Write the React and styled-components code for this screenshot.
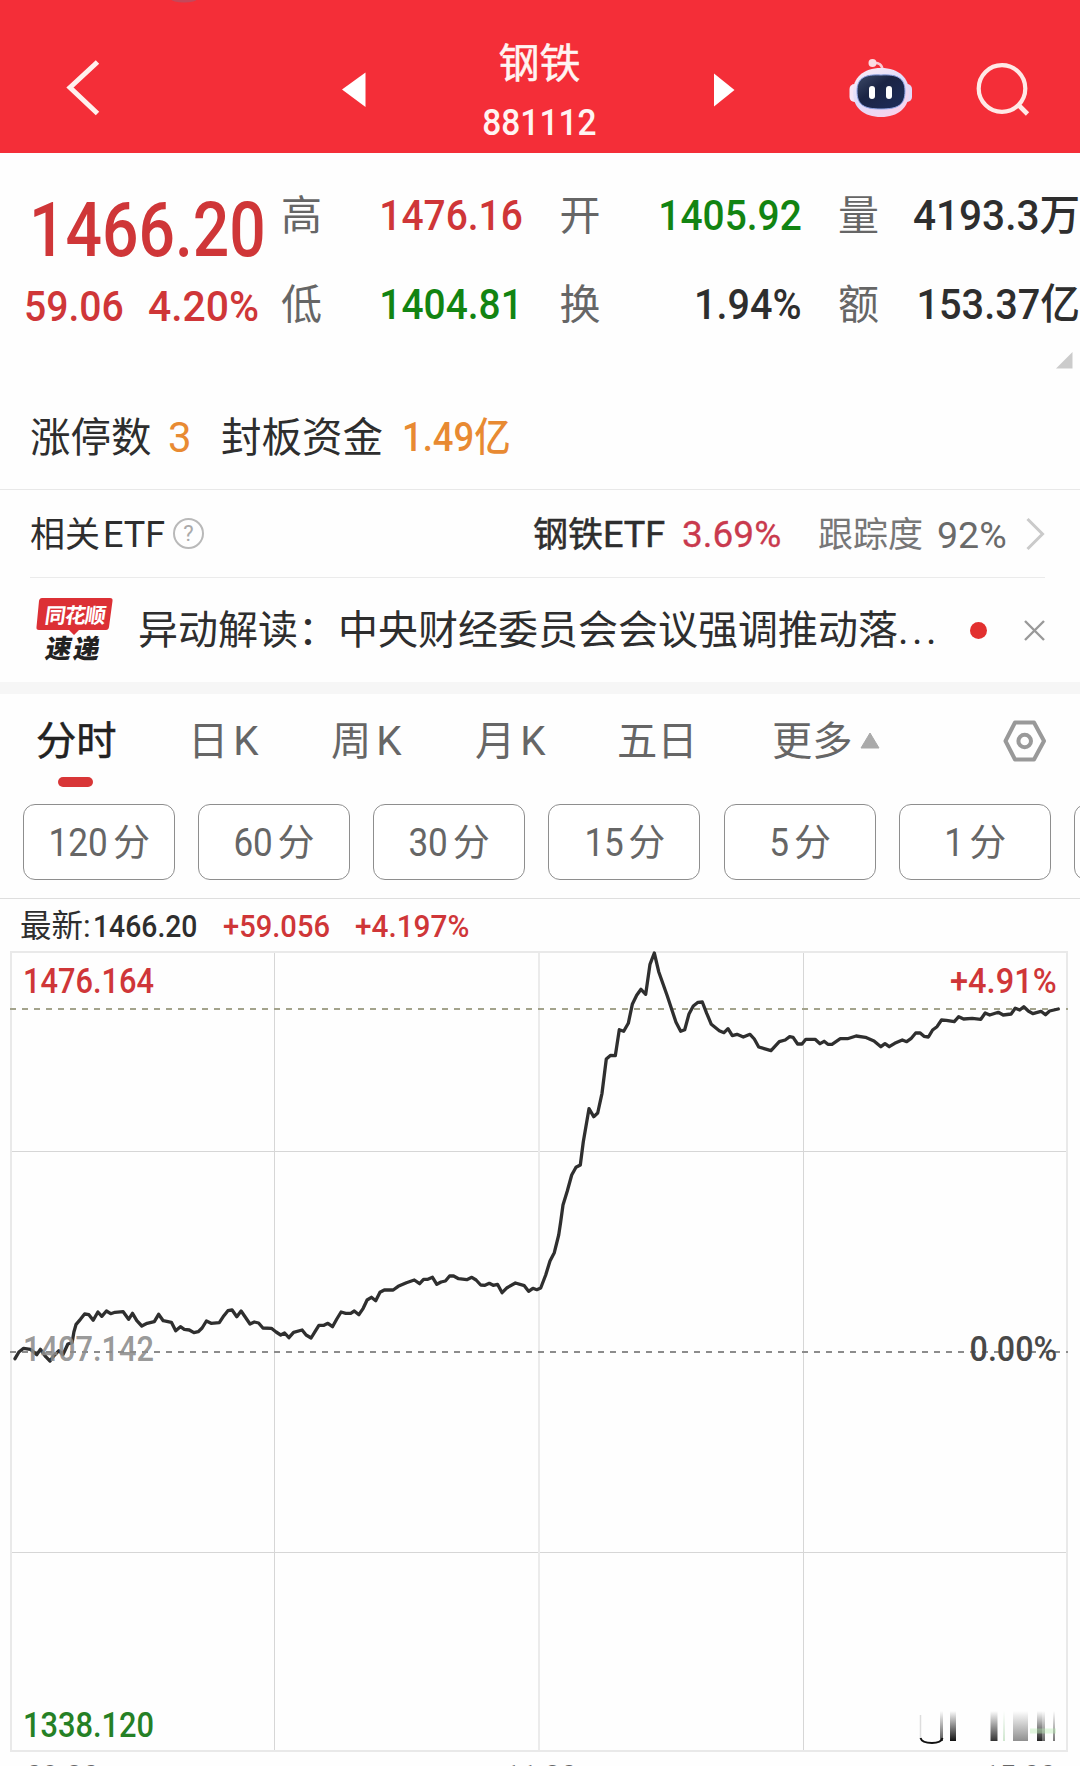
import React from "react";
import styled, { createGlobalStyle } from "styled-components";

const GlobalStyle = createGlobalStyle`
  html, body { margin: 0; padding: 0; background: #fff; }
  * { box-sizing: border-box; }
`;

const RED = "#cf3638";
const GREEN = "#128412";
const INK = "#2e2e2e";
const GRAY = "#666";

const Screen = styled.main`
  width: 1080px;
  height: 1766px;
  overflow: hidden;
  background: #fefefe;
  color: ${INK};
  font-family: Roboto, "Noto Sans CJK SC", sans-serif;
  display: flex;
  flex-direction: column;
`;

/* Narrow figures: the glyph run is condensed from one edge of its box */
const Num = styled.span`
  display: block;
  flex: none;
  white-space: nowrap;
  font-size: ${(p) => p.$size}px;
  line-height: ${(p) => p.$size}px;
  font-weight: ${(p) => p.$weight || 500};
  color: ${(p) => p.$color || "inherit"};
  transform: scaleX(${(p) => p.$k || 1});
  transform-origin: ${(p) => p.$from || "left"} center;
`;

const Header = styled.header`
  flex: none;
  height: 153px;
  background: #f42e38;
  color: #fff4f2;
  display: grid;
  grid-template-columns: 340px 400px 340px;
`;
const HeaderSide = styled.div`
  display: flex;
  align-items: flex-start;
`;
const HeaderTools = styled(HeaderSide)`
  padding: 58px 0 0 109px;
  gap: 60px;
`;
const HeaderCenter = styled.div`
  display: flex;
  justify-content: space-between;
  padding: 72px 4px 0 1px;
`;
const TitleBlock = styled.div`
  margin-top: -37px;
  width: 160px;
  display: flex;
  flex-direction: column;
  align-items: center;
`;
const Title = styled.h1`
  margin: 0;
  font-size: 41px;
  line-height: 50px;
  font-weight: 400;
  -webkit-text-stroke: 0.5px currentColor;
  font-family: "Noto Sans CJK SC", sans-serif;
`;
const Code = styled.div`
  margin-top: 20px;
`;

const Quote = styled.section`
  flex: none;
  height: 337px;
  border-bottom: 1px solid #e8e8e8;
  padding-top: 41px;
`;
const QuoteTop = styled.div`
  display: grid;
  grid-template-columns: 281px 1fr;
  height: 158px;
`;
const PriceBlock = styled.div`
  color: ${RED};
  padding: 0 0 0 24px;
  margin-top: -2px;
`;
const Price = styled.div`
  height: 93px;
  padding: 0 0 0 5px;
`;
const Changes = styled.div`
  display: grid;
  grid-template-columns: 124px 120px;
`;
const Stats = styled.div`
  display: grid;
  grid-template-columns: repeat(3, 242px);
  grid-auto-rows: 89px;
  column-gap: 36.500px;
`;
const Stat = styled.div`
  display: flex;
  justify-content: space-between;
  height: 44px;
  align-items: center;
`;
const StatLabel = styled.span`
  flex: none;
  font-size: 41px;
  line-height: 44px;
  color: ${GRAY};
`;
const CornerRow = styled.div`
  display: flex;
  justify-content: flex-end;
  padding-right: 7px;
  height: 60px;
`;
const Limits = styled.div`
  display: flex;
  align-items: center;
  padding-left: 30px;
  height: 52px;
`;
const LimitLabel = styled.span`
  font-size: 40.500px;
  line-height: 52px;
  width: ${(p) => p.$w}px;
  flex: none;
  white-space: nowrap;
`;
const LimitValue = styled.span`
  width: ${(p) => p.$w}px;
  flex: none;
`;

const EtfRow = styled.section`
  flex: none;
  height: 88px;
  margin: 0 35px 0 30px;
  border-bottom: 1px solid #ebebeb;
  display: flex;
  align-items: center;
  font-size: 35px;
  line-height: 44px;
`;
const EtfText = styled.span`
  flex: none;
  white-space: nowrap;
  padding-top: ${(p) => p.$down || 2}px;
  width: ${(p) => p.$w}px;
  font-size: ${(p) => p.$size || 35}px;
  -webkit-text-stroke: ${(p) => p.$stroke || 0}px currentColor;
  color: ${(p) => p.$color || INK};
`;
const Latin = styled.span`
  font-size: 36px;
  margin-left: ${(p) => p.$gap || 0}px;
`;
const Help = styled.span`
  width: 31px;
  height: 31px;
  margin-right: 329px;
  flex: none;
  border: 2px solid #b9b9b9;
  border-radius: 50%;
  color: #aaa;
  font-size: 22px;
  line-height: 27px;
  text-align: center;
`;

const News = styled.section`
  flex: none;
  height: 104px;
  display: flex;
  align-items: center;
  padding: 0 36px;
`;
const Brand = styled.div`
  width: 77px;
  height: 64px;
  margin-right: 25px;
  flex: none;
  display: grid;
  grid-template-rows: 37px 27px;
  justify-items: center;
  position: relative;
`;
const BrandBack = styled.svg`
  position: absolute;
  inset: 0;
`;
const BrandName = styled.span`
  position: relative;
  color: #fff;
  font: 700 21px/32px "Noto Sans CJK SC", sans-serif;
  transform: skewX(-8deg);
  letter-spacing: -1px;
`;
const BrandSub = styled.span`
  position: relative;
  color: #222;
  font: 900 26px/24px "Noto Sans CJK SC", sans-serif;
  transform: skewX(-10deg);
  letter-spacing: 2px;
`;
const Headline = styled.span`
  flex: none;
  width: 832px;
  padding-top: 1px;
  font-size: 40px;
  line-height: 50px;
  white-space: nowrap;
`;
const Dots = styled.span`
  letter-spacing: 3.500px;
`;
const Unread = styled.i`
  width: 17px;
  height: 17px;
  border-radius: 50%;
  background: #e2302f;
  margin-right: 37px;
  flex: none;
`;
const CloseIcon = styled.svg`
  flex: none;
`;
const Band = styled.div`
  flex: none;
  height: 12px;
  background: #f6f6f6;
`;

const Tabs = styled.nav`
  flex: none;
  height: 110px;
  display: grid;
  grid-template-columns: 152px 143px 144px 142px 155px 231px 1fr;
  padding: 21px 0 0 36px;
`;
const Tab = styled.div`
  display: flex;
  flex-direction: column;
  align-items: flex-start;
  font-size: 40.300px;
  line-height: 50px;
  white-space: nowrap;
  color: ${(p) => (p.$active ? "#222" : GRAY)};
  -webkit-text-stroke: ${(p) => (p.$active ? 0.5 : 0)}px currentColor;
`;
const TabText = styled.span`
  display: flex;
  align-items: center;
  padding-top: 2px;
  gap: ${(p) => p.$gap || 0}px;
`;
const MoreIcon = styled.svg`
  margin: -4px 0 0 7px;
`;
const Underline = styled.i`
  width: 35px;
  height: 10px;
  border-radius: 5px;
  background: #d83637;
  margin: 10px 0 0 22px;
`;

const Periods = styled.div`
  flex: none;
  height: 95px;
  border-bottom: 1px solid #dedede;
  padding-left: 23px;
  display: flex;
  gap: 23.150px;
  overflow: hidden;
`;
const Period = styled.button`
  flex: none;
  width: 152px;
  height: 76px;
  padding: 2px ${(p) => p.$shift || 0}px 0 0;
  border: 1px solid #8e8e8e;
  border-radius: 12px;
  background: #fff;
  color: ${GRAY};
  font: 400 37px/50px Roboto, "Noto Sans CJK SC", sans-serif;
  display: flex;
  justify-content: center;
  align-items: center;
  gap: 5px;
`;
const Unit = styled.span`
  padding-top: 2px;
`;

const Latest = styled.div`
  flex: none;
  height: 52px;
  padding: 2px 0 0 20px;
  display: grid;
  grid-template-columns: 73px 130px 132px 1fr;
  align-items: center;
  font-size: 31.500px;
  line-height: 40px;
  white-space: nowrap;
`;
const LatestLabel = styled.span`
  padding-top: 2px;
`;

const Chart = styled.section`
  flex: none;
  height: 801px;
  position: relative;
`;
const Plot = styled.svg`
  display: block;
`;
const ChartLabel = styled.div`
  position: absolute;
  top: ${(p) => p.$top}px;
  ${(p) => (p.$right ? "right: 23px;" : "left: 23px;")}
`;
const Axis = styled.div`
  flex: none;
  height: 30px;
  padding: 8px 24px 0 26px;
  display: flex;
  justify-content: space-between;
  color: #666;
`;

const series = [
  [15,1358.7],[18.9,1352],[23.6,1348.3],[30.4,1349.3],[36.8,1354.7],[40.4,1349.3],[45.7,1356.7],[50,1361],[54.3,1355.3],[58.9,1350.7],[62.9,1354.7],[67.9,1344],[72.1,1342.7],[73.9,1332],[76.1,1324.3],[80.4,1319.3],[84.6,1314],[88.9,1314.7],[93.2,1320.3],[97.9,1312],[101.8,1316.3],[106.4,1311],[110.7,1313.7],[115,1312.3],[123.2,1311.7],[128.6,1319.3],[132.5,1313.3],[136.8,1320.7],[141.8,1326],[147.1,1323.3],[154.3,1321.7],[158.6,1314.3],[163.2,1320.7],[171.4,1322.3],[175.7,1330.7],[180.4,1326.7],[184.3,1329.3],[189.3,1330],[193.9,1332.7],[198.2,1331.7],[202.1,1328],[206.4,1321],[211.1,1323.3],[219.3,1322.7],[223.9,1315.7],[227.9,1310.7],[232.1,1310],[236.8,1316.7],[241.1,1311],[250,1324],[254.3,1322],[258.6,1323],[262.9,1328],[271.4,1328.3],[276.1,1332],[280.7,1335],[284.6,1333],[288.9,1337.7],[293.6,1332.3],[302.1,1330],[306.1,1335],[311.1,1338],[315,1331.7],[318.9,1325.3],[323.9,1325.3],[327.9,1323.3],[332.5,1326.7],[336.8,1319],[341.1,1312],[345.7,1313.3],[350.7,1313.3],[354.3,1311],[358.9,1314.7],[363.2,1308.3],[367.1,1300],[371.4,1297.3],[375.7,1300.7],[380,1292.3],[384.3,1290],[393.2,1290],[398.2,1286.3],[406.4,1282.7],[414.3,1280],[419.6,1283.7],[423.6,1279.3],[427.9,1279.3],[432.5,1277.3],[436.8,1284.3],[441.1,1282],[445.4,1281],[449.6,1276],[453.6,1276],[458.6,1278.7],[466.8,1279.7],[471.8,1277.3],[476.1,1280],[480.7,1285],[485,1285.3],[489.3,1283.3],[493.2,1285.3],[497.5,1284.3],[502.1,1292.7],[507.1,1287.7],[515.4,1283],[524.3,1285.7],[528.6,1291.3],[532.9,1288.3],[536.8,1289.7],[540.7,1288],
  [545.7,1275],[550,1261],[554.3,1252.7],[558.7,1235],[560.7,1221.7],[563,1205],[567.3,1191],[571.7,1175],[576,1167.3],[580.3,1165],[583.3,1141.7],[589,1108.7],[593.7,1116.7],[597.7,1113],[602,1093.3],[606.3,1059],[610.7,1055.3],[615.3,1055.7],[619.3,1029.7],[623.7,1031.3],[628.3,1023.3],[632.3,1004.3],[636.7,995.3],[641,989.3],[645.7,994.3],[650,964.3],[654.3,953],[658.7,971.7],[667.3,996],[676,1022.3],[680.7,1031.3],[684.7,1029.7],[689,1014],[693.3,1006],[698,1002.3],[702.3,1002],[706.7,1013.3],[711.3,1024.3],[719.3,1030.7],[724,1032.7],[728,1028.7],[732.3,1035.7],[737,1034.3],[743.3,1037],[750,1034.3],[754.3,1039],[758.7,1047],[771,1050.7],
  [779.3,1041.7],[785.2,1040],[789.7,1036.7],[793.1,1037.3],[797.6,1044],[802,1044],[805.8,1039.3],[815.1,1039.3],[820,1043.7],[824.1,1041.3],[827.9,1044.3],[832,1044.3],[840.3,1038.7],[847.5,1038.7],[856.1,1036],[865.4,1037.3],[874,1041],[880.9,1046.7],[885,1043.7],[889.2,1046.7],[894.7,1043.3],[902.3,1040],[906.7,1041.7],[910.9,1038.7],[915.7,1033],[920.2,1033],[924,1036.3],[928.4,1037],[932.6,1030],[937,1026.7],[941.5,1020],[946.3,1020.3],[954.3,1021.7],[958.7,1016.7],[963.6,1019],[972.2,1018.3],[980.8,1019.3],[985.2,1013],[989.7,1015],[998.3,1012.3],[1003.2,1015],[1011.1,1014],[1015.2,1008.3],[1019.7,1010],[1023.8,1006.7],[1028.3,1011],[1032.8,1013.7],[1041,1011.3],[1045.5,1014.7],[1049.6,1011],[1058.2,1009],
];

const stats = [
  { label: "高", value: "1476.16", color: RED, k: 0.915 },
  { label: "开", value: "1405.92", color: GREEN, k: 0.915 },
  { label: "量", value: "4193.3万", k: 0.955 },
  { label: "低", value: "1404.81", color: GREEN, k: 0.915 },
  { label: "换", value: "1.94%", k: 0.93 },
  { label: "额", value: "153.37亿", k: 0.935 },
];

/* number of minutes and how far its label sits left of the middle */
const periods = [["120", 6], ["60", 5], ["30", 5], ["15", 4], ["5", 1], ["1", 1]];

/* x, width, colour of the faded strokes in the chart's lower corner */
const smears = [
  [940, 3, "#555"], [950, 6, "#111"], [990.5, 7, "#333"], [1003, 2, "#cfe6cf"],
  [1013, 15, "#8f8f8f"], [1037, 5, "#222"], [1042, 3, "#666"], [1053, 2, "#777"],
];

function Robot() {
  return (
    <svg width="64" height="60" viewBox="0 0 64 60">
      <defs>
        <linearGradient id="shell" x1="0" y1="0" x2="0.6" y2="1">
          <stop offset="0" stopColor="#ffeef4" />
          <stop offset="0.55" stopColor="#dfdcfb" />
          <stop offset="1" stopColor="#f6d3ec" />
        </linearGradient>
        <linearGradient id="visor" x1="0" y1="0" x2="1" y2="1">
          <stop offset="0" stopColor="#3c4a68" />
          <stop offset="0.4" stopColor="#1b2444" />
          <stop offset="1" stopColor="#1d2d5c" />
        </linearGradient>
      </defs>
      <path d="M24 5 Q33 4 33.500 12" fill="none" stroke="#f9c9d2" strokeWidth="2.600" />
      <circle cx="23.500" cy="5" r="4" fill="#fbdce3" />
      <rect x="0.500" y="26" width="10" height="18" rx="5" fill="#f6e6f6" />
      <rect x="53" y="26" width="10" height="18" rx="5" fill="#e3d9f8" />
      <path d="M32 10 C50 10 60 20 60 34 C60 50 49 59 32 59 C15 59 4 50 4 34 C4 20 14 10 32 10 Z" fill="url(#shell)" />
      <path d="M32 17 C48 16 56 20 56 33 C56 47 49 51 32 51 C15 51 8 47 8 33 C8 20 16 16 32 17 Z" fill="url(#visor)" stroke="#8fa5e6" strokeWidth="1" />
      <rect x="20" y="28" width="6" height="13" rx="3" fill="#fff" />
      <rect x="37" y="28" width="6" height="13" rx="3" fill="#fff" />
    </svg>
  );
}

export default function App() {
  return (
    <Screen>
      <GlobalStyle />
      <Header>
        <HeaderSide>
          <svg width="340" height="153">
            <ellipse cx="184" cy="-1" rx="13" ry="3.500" fill="#c4485a" />
            <path d="M97.500 62 L70 87.500 L97.500 113.500" fill="none" stroke="#fff1ee" strokeWidth="5" />
          </svg>
        </HeaderSide>
        <HeaderCenter>
          <svg width="26" height="36"><path d="M1 17.500 L24.500 0.500 V35 Z" fill="#fff" /></svg>
          <TitleBlock>
            <Title>钢铁</Title>
            <Code><Num $size={36} $k={0.93} $from="center">881112</Num></Code>
          </TitleBlock>
          <svg width="24" height="36"><path d="M22.500 18 L2 1.500 V34.500 Z" fill="#fff" /></svg>
        </HeaderCenter>
        <HeaderTools>
          <Robot />
          <svg width="60" height="64">
            <circle cx="29" cy="30.500" r="23.300" fill="none" stroke="#ffe9e6" strokeWidth="4.200" />
            <path d="M46 47.500 L54.500 56" stroke="#ffe9e6" strokeWidth="4.600" />
          </svg>
        </HeaderTools>
      </Header>

      <Quote>
        <QuoteTop>
          <PriceBlock>
            <Price><Num $size={76} $k={0.845}>1466.20</Num></Price>
            <Changes>
              <Num $size={43} $k={0.91}>59.06</Num>
              <Num $size={43} $k={0.95}>4.20%</Num>
            </Changes>
          </PriceBlock>
          <Stats>
            {stats.map((s) => (
              <Stat key={s.label}>
                <StatLabel>{s.label}</StatLabel>
                <Num $size={42.500} $k={s.k} $color={s.color} $from="right">{s.value}</Num>
              </Stat>
            ))}
          </Stats>
        </QuoteTop>
        <CornerRow>
          <svg width="17" height="17"><path d="M16.500 0 V16.500 H0 Z" fill="#cbcbcb" /></svg>
        </CornerRow>
        <Limits>
          <LimitLabel $w={138}>涨停数</LimitLabel>
          <LimitValue $w={53}><Num $size={42} $weight={400} $color="#e88a32">3</Num></LimitValue>
          <LimitLabel $w={181}>封板资金</LimitLabel>
          <LimitValue $w={120}><Num $size={40} $k={0.91} $color="#e88a32">1.49亿</Num></LimitValue>
        </Limits>
      </Quote>

      <EtfRow>
        <EtfText $w={143} $down={4}>相关<Latin $gap={3}>ETF</Latin></EtfText>
        <Help>?</Help>
        <EtfText $w={149} $stroke={0.5} $down={4}>钢铁<Latin>ETF</Latin></EtfText>
        <EtfText $w={136} $color="#c93a4e" $size={37} $stroke={0.3}>3.69%</EtfText>
        <EtfText $w={119} $color="#777" $down={4}>跟踪度</EtfText>
        <EtfText $w={88} $color="#6a6a6a" $size={37.500}>92%</EtfText>
        <svg width="20" height="34"><path d="M2.500 2 L17.500 17 L2.500 32" fill="none" stroke="#cacaca" strokeWidth="3" /></svg>
      </EtfRow>

      <News>
        <Brand>
          <BrandBack width="77" height="64">
            <path d="M6 0 H74 Q77 0 76.500 3 L73 29 Q72.500 32 70 32 H43 L38 37 L33 32 H3 Q0 32 0.500 29 L3 3 Q3.500 0 6 0 Z" fill="#dc3035" />
          </BrandBack>
          <BrandName>同花顺</BrandName>
          <BrandSub>速递</BrandSub>
        </Brand>
        <Headline>异动解读：中央财经委员会会议强调推动落<Dots>...</Dots></Headline>
        <Unread />
        <CloseIcon width="21" height="21"><path d="M1 1 L20 20 M20 1 L1 20" stroke="#999" strokeWidth="2.400" /></CloseIcon>
      </News>
      <Band />

      <Tabs>
        <Tab $active><TabText>分时</TabText><Underline /></Tab>
        <Tab><TabText $gap={5}><span>日</span><span>K</span></TabText></Tab>
        <Tab><TabText $gap={5}><span>周</span><span>K</span></TabText></Tab>
        <Tab><TabText $gap={5}><span>月</span><span>K</span></TabText></Tab>
        <Tab><TabText>五日</TabText></Tab>
        <Tab>
          <TabText>更多<MoreIcon width="20" height="17"><path d="M10 1 L19 16 H1 Z" fill="#aaa" stroke="#aaa" strokeLinejoin="round" /></MoreIcon></TabText>
        </Tab>
        <Tab>
          <svg width="44" height="50" viewBox="0 0 44 50">
            <path d="M12 7.500 H31 L41 26 L31 44.500 H12 L2.500 26 Z" fill="none" stroke="#999" strokeWidth="4" strokeLinejoin="round" />
            <circle cx="21.700" cy="26" r="6.300" fill="none" stroke="#999" strokeWidth="4" />
          </svg>
        </Tab>
      </Tabs>

      <Periods>
        {periods.map(([n, shift]) => (
          <Period key={n} $shift={shift}>
            <Num $size={39} $weight={400} $k={0.9} $from="right">{n}</Num>
            <Unit>分</Unit>
          </Period>
        ))}
        <Period />
      </Periods>

      <Latest>
        <LatestLabel>最新:</LatestLabel>
        <Num $size={32} $k={0.885}>1466.20</Num>
        <Num $size={32} $k={0.91} $color={RED}>+59.056</Num>
        <Num $size={32} $k={0.93} $color={RED}>+4.197%</Num>
      </Latest>

      <Chart>
        <Plot width="1080" height="801" viewBox="0 951 1080 801">
          <defs>
            {smears.map(([x, , c]) => (
              <linearGradient key={x} id={`fade${x}`} x1="0" y1="0" x2="0" y2="1">
                <stop offset="0" stopColor={c} stopOpacity="0" />
                <stop offset="1" stopColor={c} />
              </linearGradient>
            ))}
          </defs>
          <g stroke="#d6d6d6" strokeWidth="1">
            <path d="M11 1151.500 H1067 M11 1552.500 H1067 M274.500 952 V1751 M803.500 952 V1751" />
            <path d="M539 952 V1751" stroke="#ebebeb" strokeWidth="2" />
            <rect x="11" y="952" width="1056" height="799" fill="none" stroke="#e9e9e9" strokeWidth="2" />
          </g>
          <path d="M10 1009 H1068" stroke="#a3a38c" strokeWidth="2" strokeDasharray="6 6" />
          <path d="M10 1352 H1068" stroke="#8c8c8c" strokeWidth="2" strokeDasharray="6 6" />
          <polyline points={series.map((p) => p.join(",")).join(" ")} fill="none" stroke="#2f2f2f" strokeWidth="3.300" strokeLinejoin="round" strokeLinecap="round" />
          {smears.map(([x, w]) => (
            <rect key={x} x={x} y="1711" width={w} height="30" fill={`url(#fade${x})`} />
          ))}
          <path d="M920.500 1738 Q922 1743 932 1743 Q941 1743 942.500 1738" fill="none" stroke="#111" strokeWidth="2" />
          <path d="M920.500 1715 V1738" stroke="#ddd" strokeWidth="1.500" />
          <path d="M1030 1731 H1056" stroke="#b6ecb0" strokeWidth="5" opacity="0.400" />
        </Plot>
        <ChartLabel $top={13}><Num $size={35} $k={0.88} $color={RED}>1476.164</Num></ChartLabel>
        <ChartLabel $top={13} $right><Num $size={35} $k={0.93} $color={RED} $from="right">+4.91%</Num></ChartLabel>
        <ChartLabel $top={381}><Num $size={35} $k={0.88} $color="rgba(140,140,140,0.9)">1407.142</Num></ChartLabel>
        <ChartLabel $top={381} $right><Num $size={35} $k={0.92} $color="#484848" $from="right">0.00%</Num></ChartLabel>
        <ChartLabel $top={757}><Num $size={35} $k={0.88} $color="#258025">1338.120</Num></ChartLabel>
      </Chart>
      <Axis>
        <Num $size={32} $k={0.9}>09:30</Num>
        <Num $size={32} $k={0.9} $from="center">11:30</Num>
        <Num $size={32} $k={0.9} $from="right">15:00</Num>
      </Axis>
    </Screen>
  );
}
